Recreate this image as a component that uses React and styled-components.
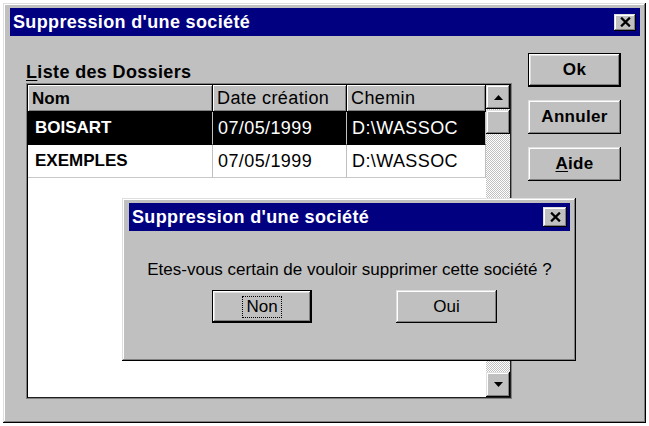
import React from "react";
import styled, { createGlobalStyle, css } from "styled-components";

const Global = createGlobalStyle`
  html, body { margin: 0; padding: 0; background: #ffffff; }
  body { font-family: "Liberation Sans", Arial, sans-serif; color: #000; }
  * { box-sizing: border-box; }
`;

const raised = css`
  background: #c0c0c0;
  box-shadow: inset -1px -1px #000, inset 1px 1px #dfdfdf,
    inset -2px -2px #808080, inset 2px 2px #fff;
`;

const Window = styled.div`
  position: relative;
  margin: 3px 0 0 3px;
  width: 643px;
  height: 420px;
  padding: 5px 6px 5px 7px;
  display: flex;
  flex-direction: column;
  ${raised}
`;

const TitleBar = styled.div`
  height: 28px;
  flex: none;
  display: flex;
  align-items: center;
  justify-content: space-between;
  padding: 0 ${(p) => p.$pr || 4}px 0 3px;
  background: #000080;
  color: #fff;
  font-weight: bold;
  font-size: 18px;
  letter-spacing: 0.35px;
  white-space: nowrap;
`;

const CloseButton = styled.div`
  width: ${(p) => p.$w}px;
  height: ${(p) => p.$h}px;
  display: flex;
  align-items: center;
  justify-content: center;
  ${raised}
`;

const Body = styled.div`
  flex: 1;
  display: flex;
  padding-left: 16px;
  gap: 16px;
`;

const LeftCol = styled.div`
  display: flex;
  flex-direction: column;
  padding-top: 26px;
`;

const Label = styled.div`
  font-weight: bold;
  font-size: 18px;
  line-height: 20px;
  height: 20px;
  margin-bottom: 1px;
  letter-spacing: 0.35px;
  u { text-decoration: underline; text-underline-offset: 2px; }
`;

const ListBox = styled.div`
  width: 486px;
  height: 316px;
  display: flex;
  background: #fff;
  border: 1px solid #808080;
  box-shadow: inset 1px 1px #000, inset -1px -1px #202020;
  padding: 1px;
`;

const Table = styled.div`
  flex: 1;
  display: grid;
  grid-template-columns: 185px 134px 139px;
  grid-auto-rows: 33px;
  grid-template-rows: 27px;
  align-content: start;
`;

const HeadCell = styled.div`
  display: flex;
  align-items: center;
  padding-left: 4px;
  background: #c0c0c0;
  font-size: ${(p) => (p.$bold ? 17 : 18)}px;
  font-weight: ${(p) => (p.$bold ? "bold" : "normal")};
  letter-spacing: ${(p) => (p.$bold ? 0 : 0.4)}px;
  box-shadow: inset -1px -1px #000, inset 1px 1px #fff, inset -2px -2px #808080;
  white-space: nowrap;
  overflow: hidden;
`;

const Cell = styled.div`
  display: flex;
  align-items: center;
  padding-left: ${(p) => (p.$bold ? 7 : 5)}px;
  font-size: ${(p) => (p.$bold ? 17 : 18)}px;
  font-weight: ${(p) => (p.$bold ? "bold" : "normal")};
  letter-spacing: ${(p) => (p.$bold ? 0 : 0.4)}px;
  background: ${(p) => (p.$selected ? "#000" : "#fff")};
  color: ${(p) => (p.$selected ? "#fff" : "#000")};
  border-right: 1px solid #c0c0c0;
  border-bottom: 1px solid ${(p) => (p.$selected ? "#000" : "#c8c8c8")};
  white-space: nowrap;
`;

const ScrollBar = styled.div`
  width: 24px;
  display: flex;
  flex-direction: column;
  background: repeating-conic-gradient(#c0c0c0 0 25%, #fff 0 50%) 0 0 / 2px 2px;
`;

const ScrollButton = styled.div`
  height: ${(p) => p.$h}px;
  flex: none;
  display: flex;
  align-items: center;
  justify-content: center;
  margin-bottom: ${(p) => p.$mb || 0}px;
  ${raised}
`;

const Track = styled.div`
  flex: 1;
`;

const ButtonCol = styled.div`
  width: 93px;
  padding-top: 17px;
  display: flex;
  flex-direction: column;
  gap: 13px;
`;

const Button = styled.div`
  width: ${(p) => p.$w || 93}px;
  height: ${(p) => p.$h || 34}px;
  display: flex;
  align-items: center;
  justify-content: center;
  font-size: 17px;
  font-weight: ${(p) => (p.$bold ? "bold" : "normal")};
  letter-spacing: ${(p) => (p.$bold ? 0.3 : 0)}px;
  ${raised}
  ${(p) =>
    p.$default &&
    css`
      border: 1px solid #000;
      box-shadow: inset -1px -1px #000, inset 1px 1px #fff,
        inset -2px -2px #808080, inset 2px 2px #dfdfdf;
    `}
  u { text-decoration: underline; text-underline-offset: 2px; }
`;

const Focus = styled.span`
  outline: 1px dotted #000;
  outline-offset: 0;
  padding: 0 3px;
  line-height: 20px;
`;

const Dialog = styled.div`
  position: absolute;
  left: 119px;
  top: 195px;
  width: 454px;
  height: 163px;
  padding: 5px 6px 4px 7px;
  display: flex;
  flex-direction: column;
  ${raised}
`;

const Message = styled.div`
  padding-top: 29px;
  font-size: 17px;
  line-height: 20px;
  text-align: center;
  white-space: nowrap;
`;

const DialogButtons = styled.div`
  margin-top: 10px;
  padding-left: 83px;
  display: flex;
  gap: 84px;
`;

const XIcon = ({ s = 10 }) => (
  <svg width={s} height={s - 1} viewBox="0 0 10 9">
    <path d="M1 0.5 L9 8.5 M9 0.5 L1 8.5" stroke="#000" strokeWidth="2" fill="none" />
  </svg>
);

const Arrow = ({ down }) => (
  <svg width="9" height="5" viewBox="0 0 9 5">
    <path d={down ? "M0 0 H9 L4.5 5 Z" : "M4.5 0 L9 5 H0 Z"} fill="#000" />
  </svg>
);

const rows = [
  { nom: "BOISART", date: "07/05/1999", chemin: "D:\\WASSOC", selected: true },
  { nom: "EXEMPLES", date: "07/05/1999", chemin: "D:\\WASSOC" },
];

export default function App() {
  return (
    <>
      <Global />
      <Window>
        <TitleBar>
          <span>Suppression d'une société</span>
          <CloseButton $w={22} $h={17}>
            <XIcon s={11} />
          </CloseButton>
        </TitleBar>
        <Body>
          <LeftCol>
            <Label>
              <u>L</u>iste des Dossiers
            </Label>
            <ListBox>
              <Table>
                <HeadCell $bold>Nom</HeadCell>
                <HeadCell>Date création</HeadCell>
                <HeadCell>Chemin</HeadCell>
                {rows.map((r) => (
                  <React.Fragment key={r.nom}>
                    <Cell $bold $selected={r.selected}>{r.nom}</Cell>
                    <Cell $selected={r.selected}>{r.date}</Cell>
                    <Cell $selected={r.selected}>{r.chemin}</Cell>
                  </React.Fragment>
                ))}
              </Table>
              <ScrollBar>
                <ScrollButton $h={24} $mb={1}>
                  <Arrow />
                </ScrollButton>
                <ScrollButton $h={24} />
                <Track />
                <ScrollButton $h={25}>
                  <Arrow down />
                </ScrollButton>
              </ScrollBar>
            </ListBox>
          </LeftCol>
          <ButtonCol>
            <Button $bold $default>Ok</Button>
            <Button $bold>Annuler</Button>
            <Button $bold>
              <u>A</u>ide
            </Button>
          </ButtonCol>
        </Body>
        <Dialog>
          <TitleBar $pr={3}>
            <span>Suppression d'une société</span>
            <CloseButton $w={24} $h={20}>
              <XIcon s={11} />
            </CloseButton>
          </TitleBar>
          <Message>Etes-vous certain de vouloir supprimer cette société ?</Message>
          <DialogButtons>
            <Button $default $w={100} $h={33}>
              <Focus>Non</Focus>
            </Button>
            <Button $w={101} $h={33}>Oui</Button>
          </DialogButtons>
        </Dialog>
      </Window>
    </>
  );
}
